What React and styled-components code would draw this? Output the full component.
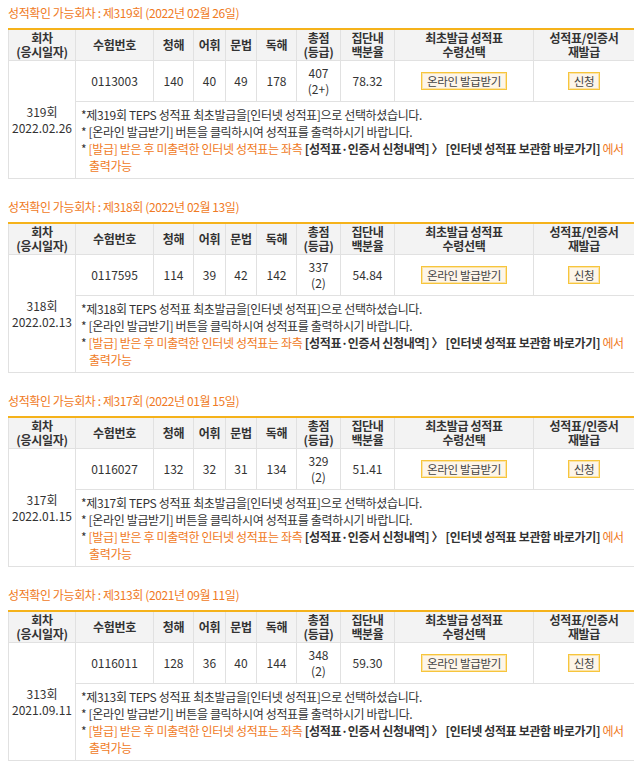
import styled, { createGlobalStyle } from "styled-components"

const GlobalStyle = createGlobalStyle`
    body {
        margin: 0 6px 0 8px;
        background: #fff;
        font-family: "Noto Sans CJK KR", "Noto Sans", sans-serif;
        color: #333;
    }
`

const rounds = [
    { no: "319", date: "2022.02.26", title: "2022년 02월 26일", id: "0113003", lc: 140, vo: 40, gr: 49, rc: 178, total: "407", grade: "(2+)", pct: "78.32" },
    { no: "318", date: "2022.02.13", title: "2022년 02월 13일", id: "0117595", lc: 114, vo: 39, gr: 42, rc: 142, total: "337", grade: "(2)", pct: "54.84" },
    { no: "317", date: "2022.01.15", title: "2022년 01월 15일", id: "0116027", lc: 132, vo: 32, gr: 31, rc: 134, total: "329", grade: "(2)", pct: "51.41" },
    { no: "313", date: "2021.09.11", title: "2021년 09월 11일", id: "0116011", lc: 128, vo: 36, gr: 40, rc: 144, total: "348", grade: "(2)", pct: "59.30" },
]

const colWidths = [67, 78, 40, 32, 31, 40, 44, 54, 139, 101]

const App = () => {
    return (
        <>
            <GlobalStyle />
            <Page>
                {rounds.map(r => (
                    <Block key={r.no}>
                        <Title>성적확인 가능회차 : 제{r.no}회 ({r.title})</Title>
                        <ScoreTable>
                            <colgroup>
                                {colWidths.map((w, i) => <col key={i} style={{ width: w }} />)}
                            </colgroup>
                            <thead>
                                <tr>
                                    <Th>회차<br />(응시일자)</Th>
                                    <Th>수험번호</Th>
                                    <Th>청해</Th>
                                    <Th>어휘</Th>
                                    <Th>문법</Th>
                                    <Th>독해</Th>
                                    <Th>총점<br />(등급)</Th>
                                    <Th>집단내<br />백분율</Th>
                                    <Th>최초발급 성적표<br />수령선택</Th>
                                    <Th>성적표/인증서<br />재발급</Th>
                                </tr>
                            </thead>
                            <tbody>
                                <tr>
                                    <Td rowSpan={2}>{r.no}회<br />{r.date}</Td>
                                    <Td>{r.id}</Td>
                                    <Td>{r.lc}</Td>
                                    <Td>{r.vo}</Td>
                                    <Td>{r.gr}</Td>
                                    <Td>{r.rc}</Td>
                                    <Td>{r.total}<br />{r.grade}</Td>
                                    <Td>{r.pct}</Td>
                                    <Td><IssueButton>온라인 발급받기</IssueButton></Td>
                                    <Td><IssueButton>신청</IssueButton></Td>
                                </tr>
                                <tr>
                                    <NoteCell colSpan={9}>
                                        <Note>*제{r.no}회 TEPS 성적표 최초발급을[인터넷 성적표]으로 선택하셨습니다.</Note>
                                        <Note $hang>* [온라인 발급받기] 버튼을 클릭하시여 성적표를 출력하시기 바랍니다.</Note>
                                        <Note $hang>
                                            * <Accent>[발급] 받은 후 미출력한 인터넷 성적표는 좌측</Accent>{" "}
                                            <Strong>[성적표·인증서 신청내역] 〉 [인터넷 성적표 보관함 바로가기]</Strong>{" "}
                                            <Accent>에서</Accent>{" "}
                                            <Accent>출력가능</Accent>
                                        </Note>
                                    </NoteCell>
                                </tr>
                            </tbody>
                        </ScoreTable>
                    </Block>
                ))}
            </Page>
        </>
    )
}

export default App

const Page = styled.div`
    width: 626px;
`

const Block = styled.section`
    padding-bottom: 15px;
`

const Title = styled.div`
    height: 28px;
    line-height: 26px;
    font-size: 12px;
    color: #f07a24;
    letter-spacing: -0.4px;
`

const ScoreTable = styled.table`
    width: 626px;
    table-layout: fixed;
    border-collapse: collapse;
    border-top: 2px solid #f5b21a;
    font-size: 12px;
`

const Th = styled.th`
    height: 30px;
    padding: 0;
    background: #f3f3f3;
    border: 1px solid #e1e1e1;
    border-top: none;
    font-weight: bold;
    font-size: 12px;
    line-height: 14px;
    color: #333;
    letter-spacing: -0.3px;
`

const Td = styled.td`
    height: 40px;
    padding: 0;
    border: 1px solid #e1e1e1;
    text-align: center;
    vertical-align: middle;
    line-height: 16px;
    color: #333;
`

const NoteCell = styled.td`
    padding: 4px 4px 4px 5px;
    border: 1px solid #e1e1e1;
    font-size: 12px;
    line-height: 17px;
    letter-spacing: -0.35px;
    word-break: keep-all;
    color: #333;
`

const Note = styled.div`
    padding-left: ${p => (p.$hang ? "8px" : "0")};
    text-indent: ${p => (p.$hang ? "-8px" : "0")};
`

const Accent = styled.span`
    color: #f07a24;
`

const Strong = styled.span`
    font-weight: bold;
    color: #333;
`

const IssueButton = styled.span`
    display: inline-block;
    height: 18px;
    padding: 0 5px;
    line-height: 16px;
    box-sizing: border-box;
    background: #fdf5e9;
    border: 1px solid #f7c53c;
    box-shadow: inset 0 0 0 1px #fbe3a6;
    font-size: 11.5px;
    color: #444;
    letter-spacing: -0.3px;
`
